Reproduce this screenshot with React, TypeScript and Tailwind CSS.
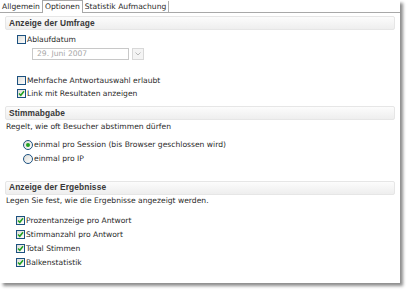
import React from 'react';

const font = { fontFamily: 'Tahoma, "DejaVu Sans", sans-serif' };

function Check({ checked }: { checked?: boolean }) {
  return (
    <span className="inline-flex w-[9px] h-[9px] border border-[#1c5180] bg-gradient-to-br from-[#dcdcd7] to-white items-center justify-center shrink-0">
      {checked && (
        <svg width="7" height="7" viewBox="0 0 7 7">
          <path d="M1 3.5 L2.8 5.3 L6 1.2" stroke="#21a121" strokeWidth="1.5" fill="none" />
        </svg>
      )}
    </span>
  );
}

function Radio({ checked }: { checked?: boolean }) {
  return (
    <span className="inline-flex w-[10px] h-[10px] rounded-full border border-[#1c5180] bg-gradient-to-br from-[#dcdcd7] to-white items-center justify-center shrink-0">
      {checked && <span className="w-[4px] h-[4px] rounded-full bg-[#21a121]" />}
    </span>
  );
}

function Header({ title }: { title: string }) {
  return (
    <div className="mx-[5px] h-[14px] rounded-[2px] border border-[#e6e6e6] bg-gradient-to-b from-[#fcfcfc] to-[#eeeeee] pl-[3px] flex items-center font-bold text-[8.4px] tracking-[0.1px] text-[#383838] font-['Liberation_Sans',sans-serif]">
      {title}
    </div>
  );
}

export default function App() {
  return (
    <div className="w-[410px] h-[294px] bg-white text-[7.6px] text-[#2a2a2a] leading-none" style={font}>
      <div className="w-[400px] h-[283px] bg-white shadow-[3px_3px_3px_rgba(0,0,0,0.45)] flex flex-col">
        {/* tabs */}
        <div className="flex h-[13px] items-end border-b border-[#a8a8a8]">
          <div className="pl-[2px] pr-[2px] h-[11px] flex items-center">Allgemein</div>
          <div className="px-[2px] h-[13px] flex items-center border-x border-t border-[#a8a8a8] bg-white -mb-px">Optionen</div>
          <div className="px-[2px] h-[11px] flex items-center border-r border-[#b0b0b0]">Statistik Aufmachung</div>
        </div>

        <div className="pt-[3px]">
          <Header title="Anzeige der Umfrage" />
          <div className="flex items-center gap-[1px] pl-[17px] mt-[5px]">
            <Check />
            <span>Ablaufdatum</span>
          </div>
          <div className="flex items-center gap-[3px] pl-[32px] mt-[4px]">
            <div className="w-[97px] h-[12px] border border-[#c8c8c8] flex items-center pl-[4px] text-[#a8a8a8]">29. Juni 2007</div>
            <div className="w-[12px] h-[12px] border border-[#d8d8d8] bg-[#f4f4f4] flex items-center justify-center">
              <svg width="6" height="4" viewBox="0 0 6 4">
                <path d="M0.5 0.5 L3 3 L5.5 0.5" stroke="#b8b8b8" fill="none" />
              </svg>
            </div>
          </div>
          <div className="flex items-center gap-[1px] pl-[17px] mt-[16px]">
            <Check />
            <span>Mehrfache Antwortauswahl erlaubt</span>
          </div>
          <div className="flex items-center gap-[1px] pl-[17px] mt-[4px]">
            <Check checked />
            <span>Link mit Resultaten anzeigen</span>
          </div>
        </div>

        <div className="pt-[8px]">
          <Header title="Stimmabgabe" />
          <div className="pl-[6px] mt-[3px]">Regelt, wie oft Besucher abstimmen dürfen</div>
          <div className="flex items-center gap-[1px] pl-[23px] mt-[9px]">
            <Radio checked />
            <span>einmal pro Session (bis Browser geschlossen wird)</span>
          </div>
          <div className="flex items-center gap-[1px] pl-[23px] mt-[4px]">
            <Radio />
            <span>einmal pro IP</span>
          </div>
        </div>

        <div className="pt-[17px]">
          <Header title="Anzeige der Ergebnisse" />
          <div className="pl-[6px] mt-[2px]">Legen Sie fest, wie die Ergebnisse angezeigt werden.</div>
          <div className="flex flex-col gap-[5px] pl-[16px] mt-[12px]">
            {['Prozentanzeige pro Antwort', 'Stimmanzahl pro Antwort', 'Total Stimmen', 'Balkenstatistik'].map((t) => (
              <div key={t} className="flex items-center gap-[1px]">
                <Check checked />
                <span>{t}</span>
              </div>
            ))}
          </div>
        </div>
      </div>
    </div>
  );
}
